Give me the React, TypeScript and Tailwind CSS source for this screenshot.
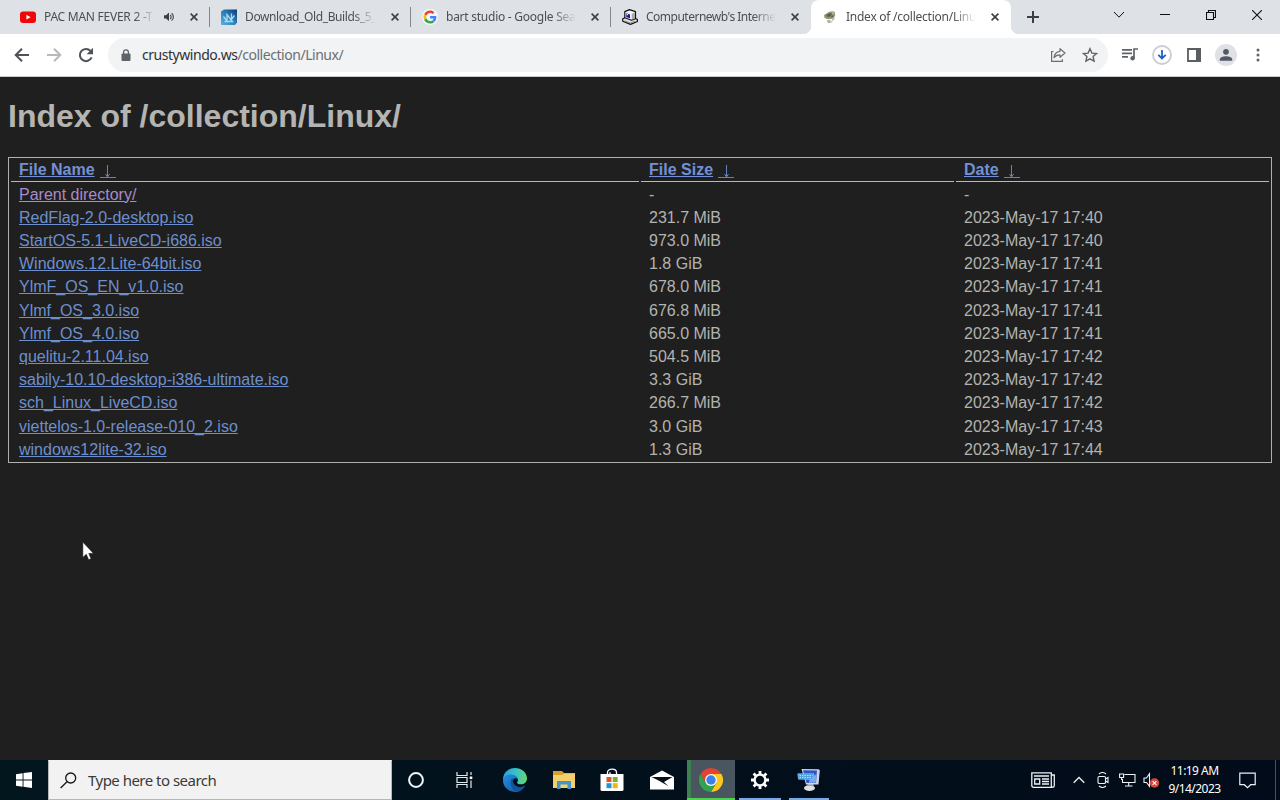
import React from "react";
import clsx from "clsx";

type FileRow = { name: string; size: string; date: string; visited?: boolean };

const files: FileRow[] = [
  { name: "Parent directory/", size: "-", date: "-", visited: true },
  { name: "RedFlag-2.0-desktop.iso", size: "231.7 MiB", date: "2023-May-17 17:40" },
  { name: "StartOS-5.1-LiveCD-i686.iso", size: "973.0 MiB", date: "2023-May-17 17:40" },
  { name: "Windows.12.Lite-64bit.iso", size: "1.8 GiB", date: "2023-May-17 17:41" },
  { name: "YlmF_OS_EN_v1.0.iso", size: "678.0 MiB", date: "2023-May-17 17:41" },
  { name: "Ylmf_OS_3.0.iso", size: "676.8 MiB", date: "2023-May-17 17:41" },
  { name: "Ylmf_OS_4.0.iso", size: "665.0 MiB", date: "2023-May-17 17:41" },
  { name: "quelitu-2.11.04.iso", size: "504.5 MiB", date: "2023-May-17 17:42" },
  { name: "sabily-10.10-desktop-i386-ultimate.iso", size: "3.3 GiB", date: "2023-May-17 17:42" },
  { name: "sch_Linux_LiveCD.iso", size: "266.7 MiB", date: "2023-May-17 17:42" },
  { name: "viettelos-1.0-release-010_2.iso", size: "3.0 GiB", date: "2023-May-17 17:43" },
  { name: "windows12lite-32.iso", size: "1.3 GiB", date: "2023-May-17 17:44" },
];

/* ---------- Tab icons ---------- */

const YouTubeIcon = () => (
  <svg width="16" height="16" viewBox="0 0 16 16">
    <rect y="2.5" width="16" height="11.5" rx="3" fill="#f00808" />
    <path d="M6.4 5.8v4.8l4.2-2.4z" fill="#fff" />
  </svg>
);

const BuildsIcon = () => (
  <svg width="16" height="16" viewBox="0 0 16 16">
    <defs>
      <linearGradient id="builds" x1="0" y1="1" x2="1" y2="0">
        <stop offset="0" stopColor="#58b4e0" />
        <stop offset="0.6" stopColor="#2474ae" />
        <stop offset="1" stopColor="#10386e" />
      </linearGradient>
    </defs>
    <path d="M0 2.5 3 .5h13v13L14 16H0z" fill="url(#builds)" />
    <path d="M2.5 7.5 6 12V5.500L10 11l3.500-4.500M10.500 4.500V12M3.500 12.500h9" fill="none" stroke="#a8dcf0" strokeWidth="1.3" />
  </svg>
);

const GoogleIcon = () => (
  <svg width="16" height="16" viewBox="0 0 48 48">
    <circle cx="24" cy="24" r="24" fill="#f5f6f8" />
    <g transform="translate(4.5 4.5) scale(.82)">
      <path fill="#EA4335" d="M24 9.5c3.54 0 6.71 1.22 9.21 3.6l6.85-6.85C35.9 2.38 30.47 0 24 0 14.62 0 6.51 5.38 2.56 13.22l7.98 6.19C12.43 13.72 17.74 9.5 24 9.5z" />
      <path fill="#4285F4" d="M46.98 24.55c0-1.57-.15-3.09-.38-4.55H24v9.02h12.94c-.58 2.96-2.26 5.48-4.78 7.18l7.73 6c4.51-4.18 7.09-10.36 7.09-17.65z" />
      <path fill="#FBBC05" d="M10.53 28.59c-.48-1.45-.76-2.99-.76-4.59s.27-3.14.76-4.59l-7.98-6.19C.92 16.46 0 20.12 0 24c0 3.88.92 7.54 2.56 10.78l7.97-6.19z" />
      <path fill="#34A853" d="M24 48c6.48 0 11.93-2.13 15.89-5.81l-7.73-6c-2.15 1.45-4.92 2.3-8.16 2.3-6.26 0-11.57-4.22-13.47-9.91l-7.98 6.19C6.51 42.62 14.62 48 24 48z" />
    </g>
  </svg>
);

const RetroPcIcon = () => (
  <svg width="16" height="16" viewBox="0 0 16 16">
    <path d="M.7 10 3 8.500h9l3.400 2v2L8.500 15.400.7 12.300z" fill="#e4e4e6" stroke="#111" strokeWidth="1.2" strokeLinejoin="round" />
    <path d="M2.800 2.600 7.500.6l6 2v7L9.500 11.300l-6.700-2.500z" fill="#f2f2f4" stroke="#111" strokeWidth="1.2" strokeLinejoin="round" />
    <path d="M9.800 4.800 13 3.400v6l-3.200 1.400z" fill="#a9a9ae" />
    <path d="M4.300 4.300 8 5.600v3.600L4.300 7.900z" fill="#12129a" />
    <path d="m4.800 4.900 1.300.4v1.200l-1.300-.5z" fill="#fff" />
    <path d="m2.500 11.800 6 2.200 4.500-2" fill="none" stroke="#777" strokeWidth=".8" />
  </svg>
);

const CrustyIcon = () => (
  <svg width="16" height="16" viewBox="0 0 16 16">
    <path d="m2 6 3-1.800L6.500 3l4-.8 2.300.8.4 3-1 2.500L9 10H4.500L2.300 8.500z" fill="#97947b" />
    <path d="m4 6 4.500-2 1.500 1-1.500 2.500-3 .5zM9.500 7l2-1-.5 2-2 .8z" fill="#5b5f4e" />
    <path d="m9.500 3.300 2-.3 1 1.800-1.500.7z" fill="#c2b58d" />
    <path d="m5 11 3-.3 1 1.300-2 1.800-1.800-.8zM9.800 9.800l2.600-1 .3 1.200-2.500 1.800z" fill="#b5b2a6" />
    <path d="m6 13.500 3-.3 1.500-1.200" fill="none" stroke="#a4a29a" strokeWidth=".9" />
  </svg>
);

const SpeakerIcon = () => (
  <svg width="12" height="12" viewBox="0 0 12 12">
    <path d="M1 4.2h2L6 1.5v8.6L3 7.6H1z" fill="#3c4043" />
    <path d="M7.3 3.8c1 1 1 3.2 0 4.2M8.6 2.2c2.3 1.6 2.3 5.8 0 7.4" fill="none" stroke="#3c4043" strokeWidth="1.1" />
  </svg>
);

const CloseIcon = () => (
  <svg width="8" height="8" viewBox="0 0 8 8">
    <path d="m.6.6 6.8 6.8M7.4.6.6 7.4" stroke="#3c4043" strokeWidth="1.6" />
  </svg>
);

type TabProps = {
  icon: React.ReactNode;
  title: string;
  width: string;
  titleWidth: string;
  tracking: string;
  playing?: boolean;
  active?: boolean;
  divider?: boolean;
};

const Tab: React.FC<TabProps> = ({ icon, title, width, titleWidth, tracking, playing, active, divider }) => (
  <div
    className={clsx(
      "relative flex h-[34px] shrink-0 items-center pl-[11px]",
      width,
      active && "rounded-t-lg bg-white"
    )}
  >
    {icon}
    <span
      className={clsx(
        "ml-2 whitespace-nowrap text-[12px] leading-4 text-[#4b4f53]",
        "[mask-image:linear-gradient(to_right,black_82%,transparent)]",
        tracking,
        titleWidth
      )}
    >
      {title}
    </span>
    {playing && (
      <span className="ml-[8px]">
        <SpeakerIcon />
      </span>
    )}
    <span className="ml-[15px]">
      <CloseIcon />
    </span>
    {divider && <span className="absolute right-0 top-[7px] h-5 w-px bg-[#80868b]" />}
    {active && (
      <>
        <span className="absolute -left-2 bottom-0 size-2 bg-[radial-gradient(circle_at_0_0,#dee1e6_8px,white_8.5px)]" />
        <span className="absolute -right-2 bottom-0 size-2 bg-[radial-gradient(circle_at_100%_0,#dee1e6_8px,white_8.5px)]" />
      </>
    )}
  </div>
);

const TabStrip = () => (
  <div className="flex h-[34px] bg-[#dee1e6] pl-[9px]">
    <Tab icon={<YouTubeIcon />} title="PAC MAN FEVER 2 -T" width="w-[201px]" titleWidth="w-[111px]" tracking="tracking-[-0.25px]" playing divider />
    <Tab icon={<BuildsIcon />} title="Download_Old_Builds_5_" width="w-[201px]" titleWidth="w-[131px]" tracking="tracking-[-0.38px]" divider />
    <Tab icon={<GoogleIcon />} title="bart studio - Google Sea" width="w-[200px]" titleWidth="w-[130px]" tracking="tracking-[-0.25px]" divider />
    <Tab icon={<RetroPcIcon />} title="Computernewb's Interne" width="w-[200px]" titleWidth="w-[130px]" tracking="tracking-[-0.5px]" />
    <Tab icon={<CrustyIcon />} title="Index of /collection/Linu" width="w-[200px]" titleWidth="w-[130px]" tracking="tracking-[-0.25px]" active />
    <div className="flex flex-1 items-center pl-[16px]">
      <svg width="12" height="12" viewBox="0 0 12 12">
        <path d="M6 0v12M0 6h12" stroke="#3c4043" strokeWidth="2" />
      </svg>
    </div>
    <div className="flex h-[29px] items-center text-[#111]">
      <span className="flex w-[46px] justify-center">
        <svg width="12" height="8" viewBox="0 0 12 8">
          <path d="m1 1 5 5.2L11 1" fill="none" stroke="currentColor" />
        </svg>
      </span>
      <span className="flex w-[46px] justify-center">
        <svg width="10" height="10" viewBox="0 0 10 10">
          <path d="M0 4.5h10" stroke="currentColor" />
        </svg>
      </span>
      <span className="flex w-[46px] justify-center">
        <svg width="10" height="10" viewBox="0 0 10 10">
          <path d="M.5 2.5h7v7h-7zM2.5 2.5v-2h7v7h-2" fill="none" stroke="currentColor" strokeWidth="1.1" />
        </svg>
      </span>
      <span className="flex w-[46px] justify-center">
        <svg width="10" height="10" viewBox="0 0 10 10">
          <path d="m0 0 10 10M10 0 0 10" stroke="currentColor" strokeWidth="1.1" />
        </svg>
      </span>
    </div>
  </div>
);

/* ---------- Toolbar ---------- */

const Toolbar = () => (
  <div className="flex h-[43px] items-center border-b border-[#c9cbce] bg-white pl-[14px] text-[#5f6368]">
    <svg width="16" height="16" viewBox="0 0 16 16" fill="none" stroke="#4f5357" strokeWidth="2">
      <path d="M15 8H2.5M8 1.7 1.7 8 8 14.3" />
    </svg>
    <svg className="ml-4" width="16" height="16" viewBox="0 0 16 16" fill="none" stroke="#b7b9bc" strokeWidth="2">
      <path d="M1 8h12.5M8 1.7 14.3 8 8 14.3" />
    </svg>
    <svg className="ml-4" width="16" height="16" viewBox="0 0 16 16">
      <path d="M13.6 10.4A6.1 6.1 0 1 1 12.5 3.9L14 5.4" fill="none" stroke="#4f5357" strokeWidth="2" />
      <path d="M15 .8v6.4H8.6z" fill="#4f5357" />
    </svg>
    <div className="ml-[14px] flex h-[34px] w-[1000px] items-center rounded-full bg-[#f1f3f4] pl-[13px]">
      <svg width="10" height="13" viewBox="0 0 10 13">
        <rect x=".5" y="4.6" width="9" height="7.4" rx="1" fill="#5f6368" />
        <path d="M2.6 5V3.3a2.4 2.4 0 0 1 4.8 0V5" fill="none" stroke="#5f6368" strokeWidth="1.3" />
      </svg>
      <span className="ml-[11px] flex-1 text-[14px] leading-5 tracking-[-0.46px] text-[#6b6f74]">
        <span className="text-[#303134]">crustywindo.ws</span>/collection/Linux/
      </span>
      <svg className="mr-4" width="16" height="16" viewBox="0 0 16 16" fill="none" stroke="#6b6f74" strokeWidth="1.2">
        <path d="M3.5 4.5H1.6v9.9h10.8v-2.2" />
        <path d="M10 1.7 15 6l-5 4.3V7.8c-2.8 0-4.6 1-6 2.9.4-3.6 2.5-6 6-6.4z" strokeLinejoin="round" />
      </svg>
      <svg className="mr-[10px]" width="16" height="16" viewBox="0 0 16 16" fill="none" stroke="#5f6368" strokeWidth="1.4">
        <path d="m8 1.8 1.9 4.3 4.7.4-3.5 3.1 1 4.6L8 11.8l-4.1 2.4 1-4.6L1.4 6.5l4.7-.4z" />
      </svg>
    </div>
    <svg className="ml-[14px]" width="16" height="16" viewBox="0 0 16 16">
      <path d="M0 2.8h10M0 6.3h10M0 9.8h6M12 11V2h4" fill="none" stroke="#5f6368" strokeWidth="1.7" />
      <circle cx="10.6" cy="11.2" r="2.2" fill="#5f6368" />
    </svg>
    <svg className="ml-[14px]" width="20" height="20" viewBox="0 0 20 20">
      <circle cx="10" cy="10" r="9" fill="none" stroke="#c9cdd2" strokeWidth="1.8" />
      <path d="M10 5v8M6.3 9.8l3.7 3.7 3.7-3.7" fill="none" stroke="#2560c4" strokeWidth="1.8" />
    </svg>
    <svg className="ml-[15px]" width="14" height="14" viewBox="0 0 14 14">
      <path d="M1 1h12v12H1z" fill="none" stroke="#5a5d61" strokeWidth="1.8" />
      <path d="M9 0h5v14H9z" fill="#5a5d61" />
    </svg>
    <span className="ml-[14px] flex size-[22px] items-center justify-center rounded-full bg-[#dfe1e5]">
      <svg width="14" height="14" viewBox="0 0 14 14" fill="#525866">
        <circle cx="7" cy="3.8" r="2.9" />
        <path d="M.8 12.8v-1.5C.8 9 5 8.2 7 8.2s6.2.8 6.2 3.1v1.5z" />
      </svg>
    </span>
    <svg className="ml-[19px]" width="4" height="14" viewBox="0 0 4 14" fill="#5f6368">
      <circle cx="2" cy="2" r="1.5" />
      <circle cx="2" cy="7" r="1.5" />
      <circle cx="2" cy="12" r="1.5" />
    </svg>
  </div>
);

/* ---------- Page ---------- */

const columns = "grid grid-cols-[628px_313px_313px] gap-x-0.5";

const HeaderCell = ({ label }: { label: string }) => (
  <div className="h-[23px] border-b border-[#b9b9b4] pl-2 pt-px leading-[19px] text-[#7391d4]">
    <span className="font-bold underline">{label}</span>
    <span className="ml-[5px] inline-flex h-4 w-4 justify-center border-b border-[#6482bd] align-[-4px]">
      <svg width="7" height="14" viewBox="0 0 7 14" className="mt-[3px]">
        <path d="M3.5 0v11M1.5 9l2 3 2-3" fill="none" stroke="#6482bd" />
      </svg>
    </span>
  </div>
);

const DirectoryPage = () => (
  <main className="h-[683px] bg-[#1f1f1f] px-2 pt-[19px] font-['Liberation_Sans',Arial,sans-serif] text-base text-[#b3b3b0]">
    <h1 className="h-[61px] text-[32px] font-bold leading-10 text-[#b4b4b2]">Index of /collection/Linux/</h1>
    <div className="h-[306px] border border-[#b0b0ac] px-0.5 pt-[1px]">
      <div className={columns}>
        <HeaderCell label="File Name" />
        <HeaderCell label="File Size" />
        <HeaderCell label="Date" />
      </div>
      <div className="pt-[0.66px]">
        {files.map((file) => (
          <div key={file.name} className={clsx(columns, "h-[23.2px] leading-[23px]")}>
            <span className="pl-2">
              <a className={clsx("underline", file.visited ? "text-[#a98bcb]" : "text-[#6d8fce]")}>{file.name}</a>
            </span>
            <span className="pl-2">{file.size}</span>
            <span className="pl-2">{file.date}</span>
          </div>
        ))}
      </div>
    </div>
  </main>
);

/* ---------- Taskbar ---------- */

const EdgeIcon = () => (
  <svg width="26" height="26" viewBox="0 0 26 26">
    <defs>
      <linearGradient id="edgeTop" x1="0" y1=".4" x2="1" y2=".5">
        <stop offset="0" stopColor="#2b9fe0" />
        <stop offset=".55" stopColor="#38c4c4" />
        <stop offset="1" stopColor="#68d56c" />
      </linearGradient>
      <linearGradient id="edgeLow" x1="0" y1="0" x2="1" y2="1">
        <stop offset="0" stopColor="#2290dc" />
        <stop offset="1" stopColor="#1252a5" />
      </linearGradient>
    </defs>
    <path d="M1 13C1 5.5 6.5 1 13 1s12 4.7 12 10.3c0 4-3 6-6 6-2.5 0-4-.8-4-1.6 0-.6 1-1 1-2.7 0-2-2-4.5-6-4.5-5 0-8 2.5-9 4.5z" fill="url(#edgeTop)" />
    <path d="M1 13c.4-3.5 4-5.6 8-5.6 4.6 0 7 2.8 7 5.3-1-1.7-3-2-4.3-.8-2.6 2.6.4 8.3 5.8 8.3 2.5 0 4.3-.8 5.5-1.5C21 23 17 25 13.2 25 6.5 25 .8 20 1 13z" fill="url(#edgeLow)" />
    <path d="M9.3 12c-2 5 .5 11 5.7 12.7 3.5-.4 6.3-2.7 8-6-2.5 1.5-6.5 2-9.5 0-2.500-1.700-3.300-4.800-1.800-6.800-.8-.6-1.900-.5-2.400.1z" fill="#14549c" />
  </svg>
);

const FolderIcon = () => (
  <svg width="22" height="20" viewBox="0 0 22 20">
    <path d="M0 1h9l2 2h11v4H0z" fill="#d99f2b" />
    <path d="M0 5h9l2-1.5h11V18H0z" fill="#f4d06a" />
    <path d="M4 19v-8h14v8h-3.500v-4.500h-7V19z" fill="#4794c9" />
  </svg>
);

const StoreIcon = () => (
  <svg width="24" height="24" viewBox="0 0 24 24">
    <path d="M7.5 7V4.500c0-4.600 9-4.600 9 0V7M10 7V4.200" fill="none" stroke="#fff" strokeWidth="1.3" />
    <path d="M.5 6h23v15.500a1.500 1.500 0 0 1-1.500 1.500H2A1.500 1.500 0 0 1 .5 21.500z" fill="#fff" />
    <path d="M6.500 9h5v5h-5z" fill="#e0522d" />
    <path d="M12.700 9h5v5h-5z" fill="#7eaf28" />
    <path d="M6.500 15.200h5v5h-5z" fill="#1c96d6" />
    <path d="M12.700 15.200h5v5h-5z" fill="#f3b31b" />
  </svg>
);

const MailIcon = () => (
  <svg width="24" height="20" viewBox="0 0 24 20">
    <path d="M0 7 12 .5 24 7v12.500H0z" fill="#fff" />
    <path d="M1.500 7h21L14 12l4.500 4.200L9.500 11z" fill="#04111c" />
  </svg>
);

const ChromeIcon = () => (
  <svg width="24" height="24" viewBox="0 0 24 24">
    <path d="M12 12V6h10.400A12 12 0 0 1 12 24l5.200-9z" fill="#fbc822" />
    <path d="M12 12l5.200 3L12 24A12 12 0 0 1 1.600 6l5.200 9z" fill="#31a350" />
    <path d="M1.600 6A12 12 0 0 1 12 0a12 12 0 0 1 10.400 6H12v6l-5.200 3z" fill="#df4334" />
    <circle cx="12" cy="12" r="6" fill="#f4f7fb" />
    <circle cx="12" cy="12" r="4.700" fill="#3c80ea" />
  </svg>
);

const GearIcon = () => (
  <svg width="20" height="20" viewBox="0 0 20 20" stroke="#fff" fill="none">
    <circle cx="10" cy="10" r="5.400" strokeWidth="2.400" />
    <path d="M10 1v3M10 16v3M1 10h3M16 10h3M3.600 3.600l2.200 2.200M14.200 14.200l2.200 2.200M3.600 16.400l2.200-2.200M14.200 5.800l2.200-2.200" strokeWidth="2.800" />
  </svg>
);

const RemotePcIcon = () => (
  <svg width="24" height="24" viewBox="0 0 24 24">
    <ellipse cx="12.500" cy="20" rx="5.500" ry="3" fill="#dedfe2" />
    <path d="M10 15h6l.8 3h-5.500z" fill="#9a9fab" />
    <path d="m4.500 1 17 .3 1.300 1-1.300 14.200L9 16.500z" fill="#cdd6e8" />
    <path d="m6 2.300 14 .3-1 12.200-9.500.2z" fill="#3056c6" />
    <path d="m12.500 11 7-5-.6 8.600-6.900.3z" fill="#7ea3ec" />
    <path d="M.8 5.800h16v5.400H1.500z" fill="#3f9be0" stroke="#9cc8ef" strokeWidth=".7" />
    <path d="M2.500 7.600h13M2.500 9.400h13" stroke="#d9efff" strokeDasharray="1.500 1" strokeWidth=".9" />
  </svg>
);

type TaskButtonProps = { children: React.ReactNode; width?: string; state?: "open" | "focused" };

const TaskButton: React.FC<TaskButtonProps> = ({ children, width = "w-12", state }) => (
  <div
    className={clsx(
      "relative flex h-10 shrink-0 items-center justify-center",
      width,
      state === "focused" && "border-l-4 border-[#3f7f54] bg-[#495660] pr-1"
    )}
  >
    {children}
    {state === "focused" && <span className="absolute -left-1 bottom-0 right-0 h-[2px] bg-[#4fd24f]" />}
    {state === "open" && <span className="absolute inset-x-[4px] bottom-0 h-[2px] bg-[#76a9e6]" />}
  </div>
);

const Taskbar = () => (
  <footer className="flex h-10 items-center bg-linear-to-r from-[#02161e] via-[#02101c] to-[#020b19] text-white">
    <div className="flex w-12 justify-center">
      <svg width="16" height="16" viewBox="0 0 16 16" fill="#fff">
        <path d="M0 2.200 6.600 1.300v6.200H0zM7.500 1.100 16 0v7.500H7.500zM0 8.400h6.600v6.300L0 13.800zM7.500 8.400H16V16l-8.500-1.200z" />
      </svg>
    </div>
    <div className="flex h-10 w-[344px] items-center border border-[#b4b6b8] border-t-[#f2f2f2] bg-[#f2f2f2] pl-[11px]">
      <svg width="17" height="17" viewBox="0 0 17 17" fill="none" stroke="#161616" strokeWidth="1.300">
        <circle cx="10.700" cy="6" r="5" />
        <path d="M7 9.700.6 16" />
      </svg>
      <span className="ml-[11px] text-[15px] leading-5 tracking-[-0.52px] text-[#3a3a3a]">Type here to search</span>
    </div>
    <TaskButton>
      <svg width="16" height="16" viewBox="0 0 16 16">
        <circle cx="8" cy="8" r="6.900" fill="none" stroke="#f2f5f7" strokeWidth="2" />
      </svg>
    </TaskButton>
    <TaskButton>
      <svg width="17" height="16" viewBox="0 0 17 16" fill="none" stroke="#e6eaed" strokeWidth="1.200">
        <path d="M1 0v3.500h10V0M1 16v-3.500h10V16M1 5.500h10v5H1zM15 0v3M15 8.500V16" />
        <path d="M13.700 4.500h2.600v2.600h-2.600z" fill="#fff" stroke="none" />
      </svg>
    </TaskButton>
    <TaskButton width="w-[53px]"><EdgeIcon /></TaskButton>
    <TaskButton width="w-[45px]"><FolderIcon /></TaskButton>
    <TaskButton width="w-[52px]"><StoreIcon /></TaskButton>
    <TaskButton width="w-[47px]"><MailIcon /></TaskButton>
    <span className="w-0.5" />
    <TaskButton state="focused"><ChromeIcon /></TaskButton>
    <TaskButton width="w-[50px]" state="open"><GearIcon /></TaskButton>
    <TaskButton state="open"><RemotePcIcon /></TaskButton>

    <div className="ml-auto flex h-10 items-center">
      <svg width="24" height="16" viewBox="0 0 24 16" fill="none" stroke="#edf1f4" strokeWidth="1.300">
        <path d="M.8.8h19.500v14.500H2.500a1.700 1.700 0 0 1-1.700-1.700zM20.300 3h3v10.600c0 2.300-3 2.300-3 0M3 4h15M3.700 7h5v5h-5zM11 7h7M11 9.500h7M11 12h7" />
      </svg>
      <svg className="ml-[18px]" width="12" height="8" viewBox="0 0 12 8" fill="none" stroke="#edf1f4" strokeWidth="1.300">
        <path d="m.7 6.800 5.300-5.300 5.300 5.300" />
      </svg>
      <svg className="ml-[12px]" width="12" height="16" viewBox="0 0 12 16" fill="none" stroke="#edf1f4" strokeWidth="1.100">
        <path d="M2 2C4 .3 7 .3 9 2M2 14c2 1.700 5 1.700 7 0" />
        <rect x="1" y="4.500" width="7.500" height="7" rx="1.300" />
        <path d="m8.500 7 2.500-1.500v5L8.500 9" />
      </svg>
      <svg className="ml-[10px]" width="17" height="14" viewBox="0 0 17 14" fill="none" stroke="#edf1f4" strokeWidth="1.100">
        <path d="M5.500 1.500H16v8H3.500V6M9.700 9.500V13M6 13h7.500M.6 1h4v3.500h-4zM2.600 4.500V7" />
      </svg>
      <svg className="ml-[7px]" width="17" height="16" viewBox="0 0 17 16">
        <path d="M1 6h2.500l3-4.300v12.600l-3-3.800H1z" fill="none" stroke="#edf1f4" strokeWidth="1.100" />
        <circle cx="11.500" cy="11" r="4.700" fill="#d8463c" />
        <path d="m9.600 9.100 3.800 3.800M13.400 9.100l-3.800 3.800" stroke="#fff" strokeWidth="1.100" />
      </svg>
      <div className="ml-[8px] w-[53px] whitespace-nowrap text-center text-[12px] leading-[18px] tracking-[-0.55px]">
        <div>11:19 AM</div>
        <div>9/14/2023</div>
      </div>
      <svg className="ml-[18px]" width="17" height="17" viewBox="0 0 17 17" fill="none" stroke="#edf1f4" strokeWidth="1.200">
        <path d="M.8 1.200h15.400v11.500h-4.500l-3.200 3-3.200-3H.8z" />
      </svg>
      <span className="ml-[19px] mr-1 h-10 w-px bg-[#47515d]" />
    </div>
  </footer>
);

const App: React.FC = () => (
  <div className="relative h-[800px] w-[1280px] overflow-hidden font-['Noto_Sans','Open_Sans',sans-serif]">
    <TabStrip />
    <Toolbar />
    <DirectoryPage />
    <Taskbar />
    <svg className="absolute left-[82px] top-[541px]" width="13" height="20" viewBox="0 0 13 20">
      <path d="M.8 1v15.500l3.500-3.200 2.300 5.400 2.500-1-2.300-5.300h4.700z" fill="#fff" stroke="#111" strokeWidth=".6" />
    </svg>
  </div>
);

export default App;
